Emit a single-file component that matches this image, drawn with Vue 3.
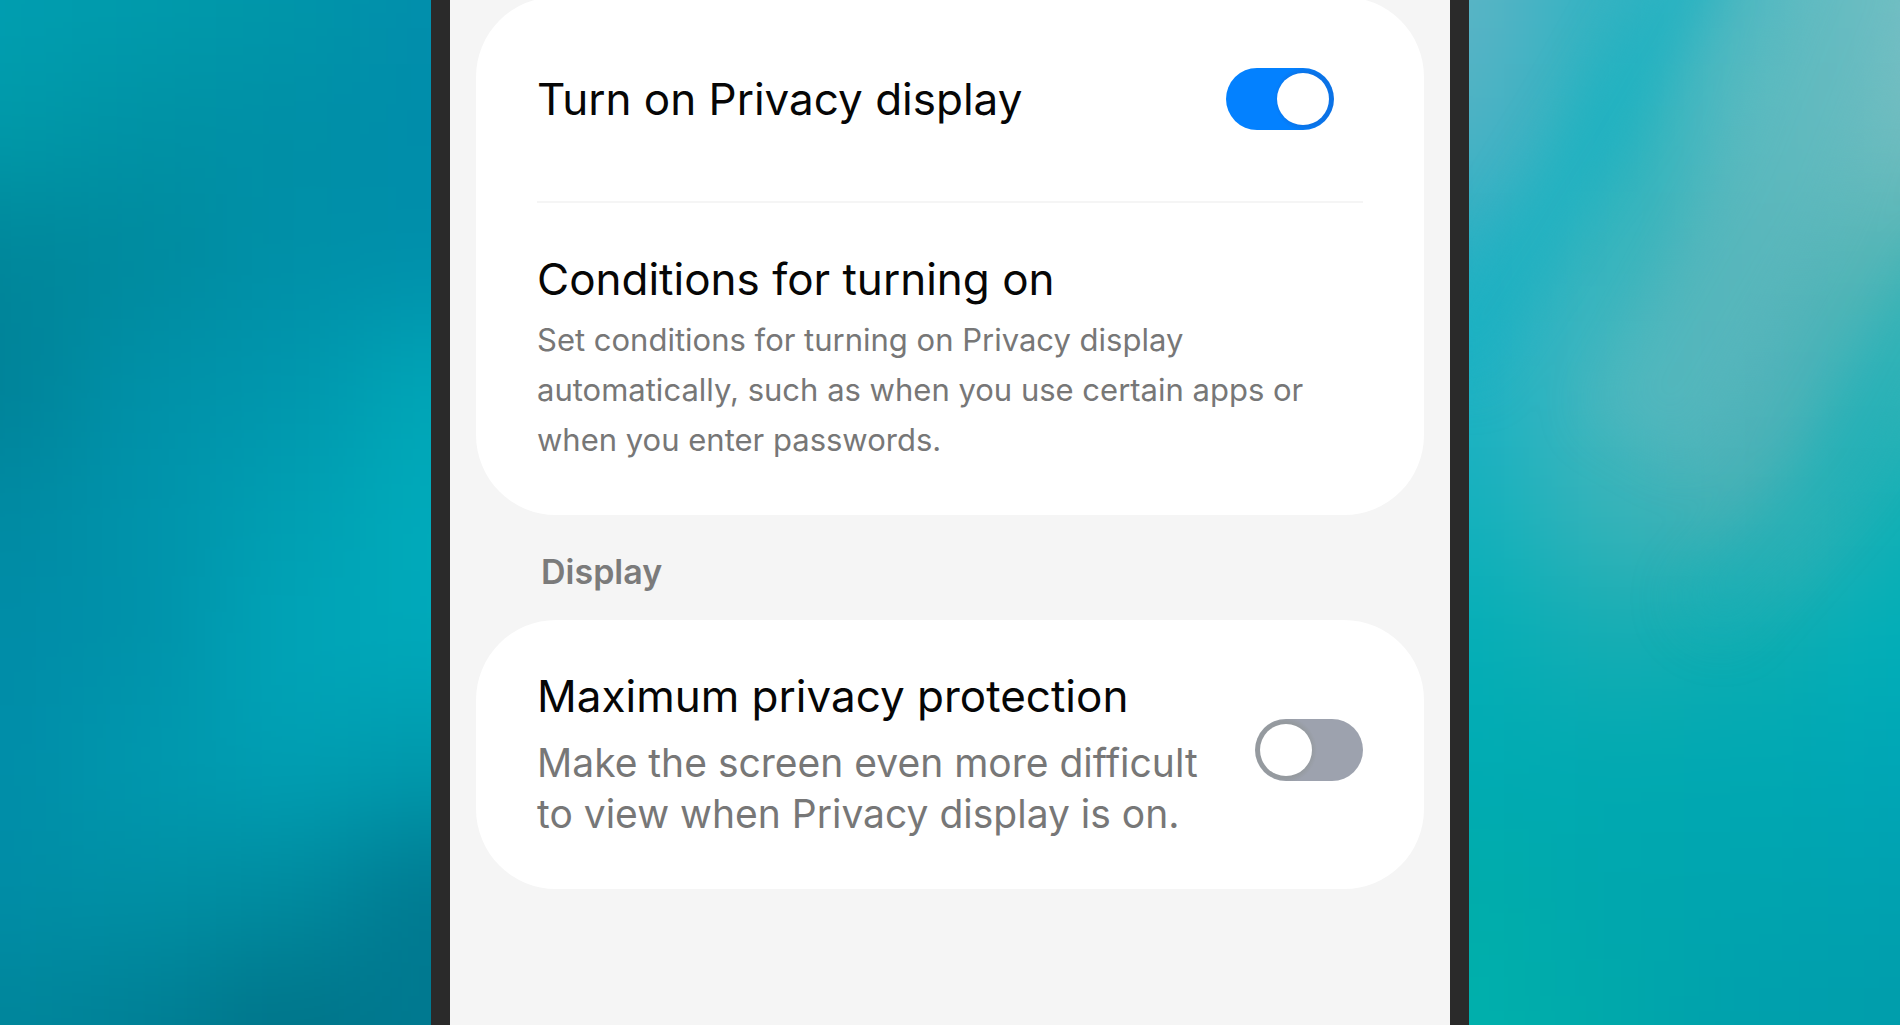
<script setup>
import { ref } from "vue";

const privacyOn = ref(true);
const maximumOn = ref(false);

// wallpaper colours, one row per step down the page
const rowStep = 128;
const colours = [
    ["#009eb1", "#009bac", "#0096a9", "#018eac", "#5cb4c5", "#30b2c2", "#50b9c1", "#7cc1c6"],
    ["#009aa9", "#0092a5", "#008fa6", "#008dab", "#4fb2c5", "#26b3bf", "#5cbbc0", "#72bdc0"],
    ["#00869a", "#008a9e", "#0090a8", "#008faa", "#27b0c4", "#36b5bd", "#57b5ba", "#55b6b6"],
    ["#008298", "#0091a8", "#0096ad", "#00a6b7", "#1cb1c4", "#45b7bf", "#54b3ba", "#34b3b7"],
    ["#008aa2", "#0093ab", "#009fb2", "#00abbb", "#13b1bd", "#38b3b9", "#4ab1b5", "#0eb0b5"],
    ["#008ca8", "#0092aa", "#00a4b7", "#00a9ba", "#03aeb6", "#15adb3", "#0badb1", "#00aeb8"],
    ["#008da8", "#0098ae", "#009fb3", "#0099ac", "#00abb3", "#00a9b1", "#00a8b2", "#00a6b6"],
    ["#008da6", "#0090a4", "#008b9f", "#00788f", "#00adaa", "#00a7ae", "#00a4af", "#00a1b0"],
    ["#00869b", "#007f95", "#007388", "#007a91", "#00b1ac", "#00a8aa", "#009fac", "#009dab"],
];

// cell edges; the wide middle ones run on behind the phone
const edges = [-200, 72, 216, 360, 950, 1540, 1684, 1828, 2100];

const cells = colours.flatMap((row, r) =>
    row.map((fill, c) => {
        const top = r === 0 ? -200 : r * rowStep - rowStep / 2;
        const bottom = r === colours.length - 1 ? 1225 : r * rowStep + rowStep / 2;
        return {
            key: `${r}-${c}`,
            x: edges[c],
            y: top,
            width: edges[c + 1] - edges[c] + 1,
            height: bottom - top + 1,
            fill,
        };
    })
);
</script>

<template>
    <div class="page">
        <svg class="wallpaper" viewBox="0 0 1900 1025" preserveAspectRatio="none" aria-hidden="true">
            <filter
                id="soften"
                filterUnits="userSpaceOnUse"
                x="-200"
                y="-200"
                width="2300"
                height="1425"
                color-interpolation-filters="sRGB"
            >
                <feGaussianBlur stdDeviation="54" />
            </filter>
            <filter
                id="streak"
                filterUnits="userSpaceOnUse"
                x="1200"
                y="-300"
                width="1000"
                height="1200"
                color-interpolation-filters="sRGB"
            >
                <feGaussianBlur stdDeviation="26" />
            </filter>
            <g filter="url(#soften)">
                <rect
                    v-for="cell in cells"
                    :key="cell.key"
                    :x="cell.x"
                    :y="cell.y"
                    :width="cell.width"
                    :height="cell.height"
                    :fill="cell.fill"
                />
            </g>
            <g filter="url(#streak)" fill="none">
                <path d="M1720 -80 L1600 130 L1450 370" stroke="#16b0c1" stroke-width="56" opacity="0.6" />
                <path d="M1880 -60 L1780 190 L1640 440" stroke="#60babd" stroke-width="120" opacity="0.4" />
                <path d="M1960 240 L1840 460 L1700 620" stroke="#14b0b6" stroke-width="60" opacity="0.4" />
            </g>
        </svg>

        <main class="phone">
            <section class="card first">
                <div class="row main-switch">
                    <label class="title" for="privacy">Turn on Privacy display</label>
                    <input id="privacy" v-model="privacyOn" class="switch" type="checkbox" role="switch" />
                </div>
                <div class="row">
                    <div class="text">
                        <h2 class="title">Conditions for turning on</h2>
                        <p class="description">
                            Set conditions for turning on Privacy display automatically, such as when you
                            use certain apps or when you enter passwords.
                        </p>
                    </div>
                </div>
            </section>

            <h3 class="group">Display</h3>

            <section class="card">
                <div class="row split">
                    <div class="text">
                        <label class="title" for="maximum">Maximum privacy protection</label>
                        <p class="description large">
                            Make the screen even more difficult to view when Privacy display is on.
                        </p>
                    </div>
                    <input id="maximum" v-model="maximumOn" class="switch" type="checkbox" role="switch" />
                </div>
            </section>
        </main>
    </div>
</template>

<style>
body {
    margin: 0;
}
</style>

<style scoped>
.page {
    position: relative;
    display: flex;
    justify-content: center;
    height: 100vh;
    overflow: hidden;
    background: #0097ad;
    font-family: "Inter", "Liberation Sans", sans-serif;
}

.wallpaper {
    position: absolute;
    inset: 0;
    width: 100%;
    height: 100%;
}

.phone {
    position: relative;
    box-sizing: border-box;
    width: 100%;
    max-width: 1038px;
    padding: 0 26px;
    border: solid #2a2a2a;
    border-width: 0 19px;
    background: #f5f5f5;
    overflow: hidden;
}

.card {
    padding: 0 61px;
    border-radius: 80px;
    background: #fff;
}

/* the list is scrolled a little under the top edge */
.first {
    margin-top: -3px;
}

.row {
    display: flex;
    padding: 48px 0 50px;
}

.main-switch {
    align-items: center;
    justify-content: space-between;
    padding: 71px 29px 71px 0;
    border-bottom: 2px solid #f5f5f5;
}

.split {
    justify-content: space-between;
    gap: 40px;
}

.split .switch {
    margin-top: 51px;
}

.title {
    display: block;
    margin: 0;
    font-size: 44px;
    font-weight: 400;
    line-height: 56px;
    color: #060606;
}

.description {
    margin: 8px 0 0;
    font-size: 31px;
    line-height: 50px;
    color: #777;
}

.large {
    margin-top: 13px;
    font-size: 39px;
    line-height: 51px;
}

.group {
    margin: 0;
    padding: 34px 65px 26px;
    font-size: 34px;
    font-weight: 600;
    line-height: 45px;
    color: #7b7b7b;
}

.switch {
    flex: none;
    display: flex;
    appearance: none;
    box-sizing: border-box;
    width: 108px;
    height: 62px;
    margin: 0;
    padding: 5px;
    border-radius: 31px;
    background: radial-gradient(circle at 28px 31px, #959a9f 28px, #9da2ae 34px);
    cursor: pointer;
}

.switch::before {
    content: "";
    width: 52px;
    height: 52px;
    border-radius: 50%;
    background: #fff;
}

.switch:checked {
    justify-content: flex-end;
    background: radial-gradient(circle at 82px 31px, #0b72e6 26px, #0381ff 34px);
}
</style>
